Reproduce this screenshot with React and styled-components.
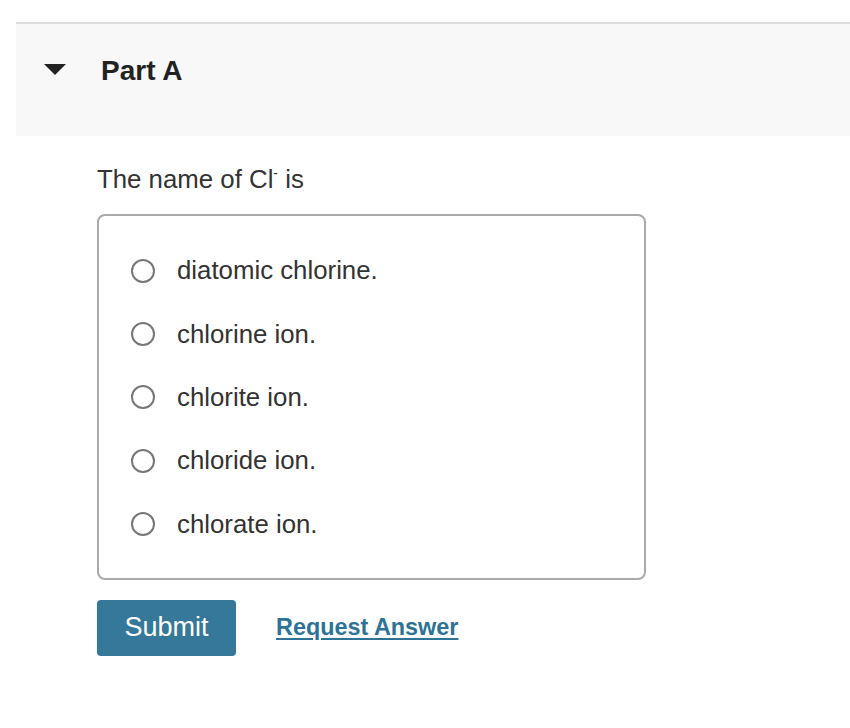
import React, { useState } from 'react';
import styled, { createGlobalStyle } from 'styled-components';

const GlobalStyle = createGlobalStyle`
  body {
    margin: 0;
    background: #ffffff;
    font-family: "Liberation Sans", Arial, Helvetica, sans-serif;
    color: #333333;
  }
`;

const Page = styled.div`
  padding-top: 22px;
  width: 850px;
`;

const PartHeader = styled.div`
  margin-left: 16px;
  height: 114px;
  border-top: 2px solid #dddddd;
  background-color: #f8f8f8;
  display: flex;
  align-items: flex-start;
  padding: 31px 0 0 28px;
  box-sizing: border-box;
`;

const Caret = styled.span`
  width: 0;
  height: 0;
  border-left: 11px solid transparent;
  border-right: 11px solid transparent;
  border-top: 11px solid #222222;
  margin: 9px 35px 0 0;
`;

const PartTitle = styled.h2`
  margin: 0;
  font-size: 28px;
  line-height: 32px;
  font-weight: bold;
  color: #222222;
`;

const Body = styled.div`
  padding: 28px 0 0 97px;
`;

const Question = styled.p`
  margin: 0 0 20px;
  font-size: 25.8px;
  line-height: 30px;
  color: #333333;

  sup {
    font-size: 14px;
    vertical-align: top;
    line-height: 1;
    position: relative;
    top: 2px;
  }
`;

const ChoiceBox = styled.div`
  width: 549px;
  box-sizing: border-box;
  border: 2px solid #aaaaaa;
  border-radius: 8px;
  padding: 23px 0 22px 32px;
`;

const Choice = styled.label`
  display: flex;
  align-items: center;
  height: 63.4px;
  font-size: 25.8px;
  color: #333333;
  cursor: pointer;
`;

const Radio = styled.span`
  width: 24px;
  height: 24px;
  box-sizing: border-box;
  border-radius: 50%;
  border: 2px solid ${p => (p.$checked ? '#357899' : '#777777')};
  margin-right: 22px;
  display: flex;
  align-items: center;
  justify-content: center;
  flex-shrink: 0;

  &::after {
    content: '';
    width: 12px;
    height: 12px;
    border-radius: 50%;
    background: ${p => (p.$checked ? '#357899' : 'transparent')};
  }
`;

const Actions = styled.div`
  display: flex;
  align-items: center;
  margin-top: 20px;
  gap: 40px;
`;

const SubmitButton = styled.button`
  width: 139px;
  height: 56px;
  border: none;
  border-radius: 4px;
  background-color: #367899;
  color: #ffffff;
  font-family: "Liberation Sans", Arial, sans-serif;
  font-size: 27px;
  cursor: pointer;
`;

const RequestLink = styled.a`
  font-size: 23.4px;
  font-weight: bold;
  color: #2e7396;
  text-decoration: underline;
  text-underline-offset: 3px;
  text-decoration-thickness: 2px;
  cursor: pointer;
`;

const choices = [
  'diatomic chlorine.',
  'chlorine ion.',
  'chlorite ion.',
  'chloride ion.',
  'chlorate ion.',
];

const App = () => {
  const [selected, setSelected] = useState(null);

  return (
    <Page>
      <GlobalStyle />
      <PartHeader>
        <Caret />
        <PartTitle>Part A</PartTitle>
      </PartHeader>
      <Body>
        <Question>
          The name of Cl<sup>-</sup> is
        </Question>
        <ChoiceBox>
          {choices.map((c, i) => (
            <Choice key={i} onClick={() => setSelected(i)}>
              <Radio $checked={selected === i} />
              {c}
            </Choice>
          ))}
        </ChoiceBox>
        <Actions>
          <SubmitButton>Submit</SubmitButton>
          <RequestLink>Request Answer</RequestLink>
        </Actions>
      </Body>
    </Page>
  );
};

export default App;
